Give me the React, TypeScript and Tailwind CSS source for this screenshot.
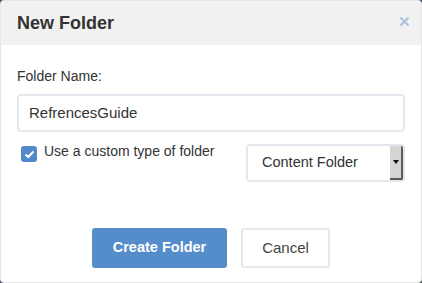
import React from "react";

const App = () => {
  return (
    <div className="w-[422px] h-[283px] bg-[#4b5563]" style={{ fontFamily: '"Liberation Sans", Arial, sans-serif' }}>
      <div className="w-full h-full flex flex-col bg-white rounded-[4px] border border-[#e6e6e6] overflow-hidden">
        {/* Header */}
        <div className="h-[44px] flex-shrink-0 flex items-center justify-between pl-4 pr-[11px] bg-[#f1f1f1]">
          <span className="text-[18px] font-bold text-[#333]">New Folder</span>
          <svg width="11" height="11" viewBox="0 0 11 11" className="mt-[-3px]">
            <path d="M1.5 1.5L9.5 9.5M9.5 1.5L1.5 9.5" stroke="#a9c2df" strokeWidth="2" />
          </svg>
        </div>
        {/* Body */}
        <div className="flex flex-col px-4 pt-[21px]">
          <label className="text-[14px] leading-[20px] text-[#333]">Folder Name:</label>
          <div className="mt-[8px] h-[38px] flex items-center px-[10px] border-2 border-[#e3e8ee] rounded-[4px] text-[15px] text-[#333]">
            RefrencesGuide
          </div>
          <div className="mt-[12px] flex justify-between">
            <div className="flex items-start pt-[2px] pl-[4px]">
              <div className="w-[16px] h-[16px] rounded-[3px] bg-[#5289cb] flex items-center justify-center">
                <svg width="11" height="9" viewBox="0 0 11 9">
                  <path d="M1.5 4.5L4.2 7L9.5 1.5" fill="none" stroke="#fff" strokeWidth="2.2" />
                </svg>
              </div>
              <span className="ml-[7px] mt-[-4px] text-[14px] leading-[18px] text-[#333]">
                Use a custom type of folder
              </span>
            </div>
            <div className="w-[159px] h-[38px] flex items-center justify-between border-2 border-[#e3e8ee] rounded-[4px] overflow-hidden">
              <span className="pl-[14px] text-[14.5px] text-[#333]">Content Folder</span>
              <div className="w-[13px] h-full flex items-center justify-center bg-[#d4d4d4] border-r-2 border-b-2 border-[#5a5a5a]">
                <svg width="6" height="4" viewBox="0 0 6 4">
                  <path d="M0 0H6L3 4Z" fill="#111" />
                </svg>
              </div>
            </div>
          </div>
          <div className="mt-[46px] flex justify-center gap-[14px]">
            <button className="w-[135px] h-[40px] rounded-[3px] bg-[#558dca] text-white text-[14.5px] font-bold">
              Create Folder
            </button>
            <button className="w-[89px] h-[40px] rounded-[3px] bg-white border-2 border-[#e3e8ee] text-[#444] text-[15px]">
              Cancel
            </button>
          </div>
        </div>
      </div>
    </div>
  );
};

export default App;
